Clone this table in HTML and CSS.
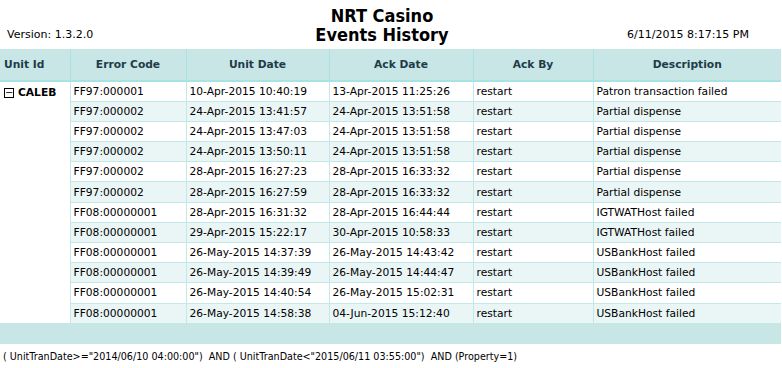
FILE: index.html
```html
<!DOCTYPE html>
<html>
<head>
<meta charset="utf-8">
<link rel="stylesheet" href="styles.css">
</head>
<body>
<div class="report">
  <div class="top">
    <div class="version">Version: 1.3.2.0</div>
    <div class="title">NRT Casino<br>Events History</div>
    <div class="stamp">6/11/2015 8:17:15 PM</div>
  </div>
  <table class="grid">
    <colgroup>
      <col class="c1"><col class="c2"><col class="c3"><col class="c4"><col class="c5"><col class="c6">
    </colgroup>
    <thead>
      <tr>
        <th class="left">Unit Id</th>
        <th>Error Code</th>
        <th>Unit Date</th>
        <th>Ack Date</th>
        <th>Ack By</th>
        <th>Description</th>
      </tr>
    </thead>
    <tbody>
      <tr><td class="unit" rowspan="12"><span class="box">−</span>CALEB</td><td>FF97:000001</td><td>10-Apr-2015 10:40:19</td><td>13-Apr-2015 11:25:26</td><td>restart</td><td>Patron transaction failed</td></tr>
      <tr class="alt"><td>FF97:000002</td><td>24-Apr-2015 13:41:57</td><td>24-Apr-2015 13:51:58</td><td>restart</td><td>Partial dispense</td></tr>
      <tr><td>FF97:000002</td><td>24-Apr-2015 13:47:03</td><td>24-Apr-2015 13:51:58</td><td>restart</td><td>Partial dispense</td></tr>
      <tr class="alt"><td>FF97:000002</td><td>24-Apr-2015 13:50:11</td><td>24-Apr-2015 13:51:58</td><td>restart</td><td>Partial dispense</td></tr>
      <tr><td>FF97:000002</td><td>28-Apr-2015 16:27:23</td><td>28-Apr-2015 16:33:32</td><td>restart</td><td>Partial dispense</td></tr>
      <tr class="alt"><td>FF97:000002</td><td>28-Apr-2015 16:27:59</td><td>28-Apr-2015 16:33:32</td><td>restart</td><td>Partial dispense</td></tr>
      <tr><td>FF08:00000001</td><td>28-Apr-2015 16:31:32</td><td>28-Apr-2015 16:44:44</td><td>restart</td><td>IGTWATHost failed</td></tr>
      <tr class="alt"><td>FF08:00000001</td><td>29-Apr-2015 15:22:17</td><td>30-Apr-2015 10:58:33</td><td>restart</td><td>IGTWATHost failed</td></tr>
      <tr><td>FF08:00000001</td><td>26-May-2015 14:37:39</td><td>26-May-2015 14:43:42</td><td>restart</td><td>USBankHost failed</td></tr>
      <tr class="alt"><td>FF08:00000001</td><td>26-May-2015 14:39:49</td><td>26-May-2015 14:44:47</td><td>restart</td><td>USBankHost failed</td></tr>
      <tr><td>FF08:00000001</td><td>26-May-2015 14:40:54</td><td>26-May-2015 15:02:31</td><td>restart</td><td>USBankHost failed</td></tr>
      <tr class="alt"><td>FF08:00000001</td><td>26-May-2015 14:58:38</td><td>04-Jun-2015 15:12:40</td><td>restart</td><td>USBankHost failed</td></tr>
    </tbody>
    <tfoot>
      <tr><td colspan="6" class="band"></td></tr>
    </tfoot>
  </table>
  <div class="filter">( UnitTranDate&gt;="2014/06/10 04:00:00")&nbsp; AND ( UnitTranDate&lt;"2015/06/11 03:55:00")&nbsp; AND (Property=1)</div>
</div>
</body>
</html>
```
FILE: styles.css
```css
html, body {
  margin: 0;
  padding: 0;
  background: #ffffff;
}
body {
  font-family: "DejaVu Sans", Verdana, sans-serif;
  font-size: 10.7px;
  color: #000;
}
.report {
  width: 782px;
}
.top {
  display: grid;
  grid-template-columns: 1fr auto 1fr;
  align-items: end;
  height: 49px;
  padding: 0 7px 0 7px;
  box-sizing: border-box;
}
.version {
  font-size: 11px;
  padding-bottom: 8px;
}
.title {
  font-family: "DejaVu Sans Condensed", "DejaVu Sans", sans-serif;
  font-weight: bold;
  font-size: 18px;
  line-height: 19px;
  text-align: center;
  padding-bottom: 5px;
  padding-right: 18px;
}
.stamp {
  text-align: right;
  font-size: 11px;
  padding-bottom: 8px;
  padding-right: 26px;
}
.grid {
  width: 781px;
  border-collapse: collapse;
  table-layout: fixed;
}
.c1 { width: 70px; }
.c2 { width: 116px; }
.c3 { width: 143px; }
.c4 { width: 144px; }
.c5 { width: 120px; }
.c6 { width: 188px; }
.grid th {
  background: #c8e6e6;
  color: #1f3b4a;
  font-weight: bold;
  font-size: 10.7px;
  height: 31px;
  padding: 0 4px;
  text-align: center;
  border-left: 1px solid #a8e2e2;
  border-bottom: 2px solid #a8e2e2;
}
.grid th.left {
  text-align: left;
  border-left: none;
}
.grid td {
  height: 20.2px;
  padding: 0 3px 0 3px;
  border-left: 1px solid #c2e8e8;
  border-bottom: 1px solid #c2e8e8;
  white-space: nowrap;
  box-sizing: border-box;
}
.grid tr.alt td {
  background: #eaf6f6;
}
.grid td.unit {
  vertical-align: top;
  font-weight: bold;
  background: #fff;
  border-left: none;
  padding-top: 4px;
  padding-left: 4px;
}
.box {
  display: inline-block;
  width: 8px;
  height: 8px;
  border: 1px solid #000;
  line-height: 7px;
  font-size: 10px;
  text-align: center;
  font-weight: normal;
  margin-right: 4px;
  vertical-align: 0px;
}
.grid td.band {
  background: #c8e6e6;
  height: 21px;
  border: none;
}
.filter {
  font-size: 9.6px;
  padding: 7px 3px;
}
```
